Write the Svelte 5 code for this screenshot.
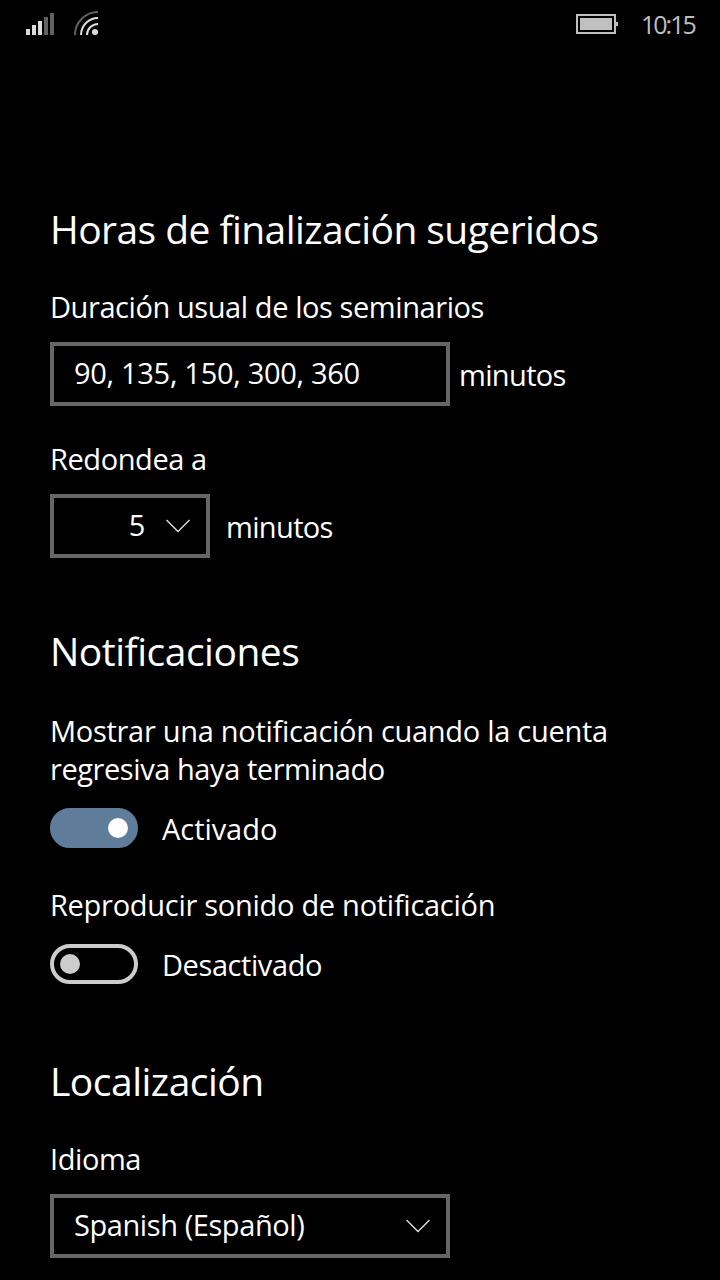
<script>
  let duration = $state('90, 135, 150, 300, 360');
  let notify = $state(true);
  let sound = $state(false);
</script>

{#snippet chevron()}
  <svg class="chevron" width="26" height="16" viewBox="0 0 26 16" aria-hidden="true">
    <path d="M1.5 2 L13 13.5 L24.5 2" fill="none" stroke="#e0e0e0" stroke-width="1.4" />
  </svg>
{/snippet}

<div class="screen">
  <header class="status">
    <svg class="signal" width="28" height="22" viewBox="0 0 28 22" aria-hidden="true">
      <g fill="#dcdcdc">
        <rect x="0" y="16" width="4" height="6" />
        <rect x="6" y="12" width="4" height="10" />
        <rect x="12" y="8" width="4" height="14" />
      </g>
      <g fill="#616161">
        <rect x="18" y="4" width="4" height="18" />
        <rect x="24" y="0" width="4" height="22" />
      </g>
    </svg>
    <svg class="wifi" width="24" height="24" viewBox="0 0 24 24" aria-hidden="true">
      <g fill="none" stroke-width="2">
        <path d="M1 24 A23 23 0 0 1 24 1" stroke="#616161" />
        <path d="M7 24 A17 17 0 0 1 24 7" stroke="#dcdcdc" />
        <path d="M13 24 A11 11 0 0 1 24 13" stroke="#dcdcdc" />
      </g>
      <circle cx="21" cy="21" r="3.1" fill="#dcdcdc" />
    </svg>
    <svg class="battery" width="42" height="20" viewBox="0 0 42 20" aria-hidden="true">
      <rect x="1" y="1" width="38" height="18" fill="none" stroke="#bfbfbf" stroke-width="2" />
      <rect x="4" y="4" width="32" height="12" fill="#bfbfbf" />
      <rect x="40" y="8" width="2" height="4" fill="#bfbfbf" />
    </svg>
    <span class="clock">10:15</span>
  </header>

  <main>
    <section>
      <h2 class="h-suggested">Horas de finalización sugeridos</h2>
      <p class="label l-duration">Duración usual de los seminarios</p>
      <div class="row">
        <div class="box wide"><span class="numbers">{duration}</span></div>
        <span class="unit">minutos</span>
      </div>
      <p class="label l-round">Redondea a</p>
      <div class="row round">
        <div class="box small"><span>5</span>{@render chevron()}</div>
        <span class="unit">minutos</span>
      </div>
    </section>

    <section class="notifications">
      <h2 class="h-notifications">Notificaciones</h2>
      <p class="label l-show">Mostrar una notificación cuando la cuenta<br /><span class="l-show2">regresiva haya terminado</span></p>
      <div class="row toggle-row">
        <button class="toggle" class:on={notify} aria-label="Notificación" onclick={() => (notify = !notify)}><i></i></button>
        <span class="state s-on">{notify ? 'Activado' : 'Desactivado'}</span>
      </div>
      <p class="label l-sound">Reproducir sonido de notificación</p>
      <div class="row toggle-row">
        <button class="toggle" class:on={sound} aria-label="Sonido" onclick={() => (sound = !sound)}><i></i></button>
        <span class="state s-off">{sound ? 'Activado' : 'Desactivado'}</span>
      </div>
    </section>

    <section class="locale">
      <h2 class="h-locale">Localización</h2>
      <p class="label l-lang">Idioma</p>
      <div class="box wide select"><span class="lang">Spanish (Español)</span>{@render chevron()}</div>
    </section>
  </main>
</div>

<style>
  :global(body) { margin: 0; background: #000; }
  .screen {
    width: 720px;
    height: 1280px;
    overflow: hidden;
    box-sizing: border-box;
    background: #000;
    color: #fff;
    font-family: 'Open Sans', 'Noto Sans', sans-serif;
    font-size: 29px;
    font-weight: 400;
    line-height: 38px;
    white-space: nowrap;
    letter-spacing: -0.42px;
    font-variant-ligatures: none;
  }
  .status { display: flex; height: 50px; padding: 0 25px 0 26px; align-items: flex-start; }
  .signal { margin-top: 13px; }
  .wifi { margin: 11px 0 0 20px; }
  .battery { margin: 14px 0 0 auto; }
  .clock {
    width: 54px;
    margin-left: 23px;
    margin-top: 6px;
    font-size: 25px;
    font-weight: 400;
    line-height: 36px;
    color: #bfbfbf;
    letter-spacing: -2px;
  }
  main { padding: 152px 50px 0; }
  h2 { margin: 0; font-size: 39px; font-weight: 400; line-height: 54px; letter-spacing: -0.5px; }
  .h-suggested { letter-spacing: -0.56px; }
  .label { margin: 32px 0 16px; }
  .row { display: flex; align-items: center; }
  .box {
    display: flex;
    align-items: center;
    box-sizing: border-box;
    height: 64px;
    padding: 0 15px 2px 20px;
    border: 4px solid #666;
  }
  .numbers { letter-spacing: -0.29px; }
  .wide { width: 400px; }
  .small { width: 160px; justify-content: flex-end; gap: 20px; }
  .select { justify-content: space-between; }
  .chevron { position: relative; top: 1px; }
  .unit { margin-left: 9px; padding-top: 1px; letter-spacing: -0.65px; }
  .round .unit { margin-left: 16px; }
  .label.l-round { margin-top: 34px; }
  .notifications { margin-top: 66px; }
  .label.l-show { margin: 34px 0 20px; letter-spacing: -0.29px; }
  .l-show2 { letter-spacing: -0.43px; }
  .toggle-row { height: 40px; }
  .toggle {
    display: flex;
    align-items: center;
    box-sizing: border-box;
    width: 88px;
    height: 40px;
    margin: 0 24px 0 0;
    padding: 0 6px;
    border: 4px solid #ccc;
    border-radius: 20px;
    background: transparent;
  }
  .toggle i { width: 20px; height: 20px; border-radius: 50%; background: #ccc; }
  .toggle.on { justify-content: flex-end; background: #5f7d9a; border-color: #5f7d9a; }
  .toggle.on i { background: #fff; }
  .state { padding-top: 1px; }
  .s-on { letter-spacing: -0.05px; }
  .label.l-sound { margin: 38px 0 20px; letter-spacing: -0.28px; }
  .locale { margin-top: 70px; }
</style>
